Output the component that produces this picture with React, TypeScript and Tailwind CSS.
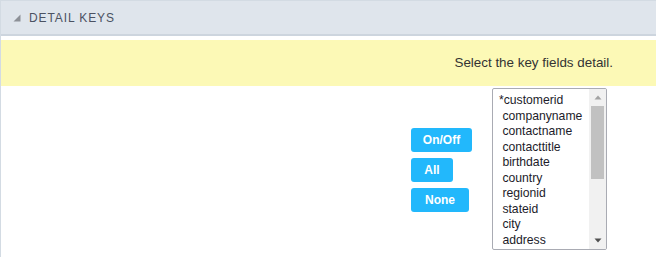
import React from "react";

const items = [
  "*customerid",
  " companyname",
  " contactname",
  " contacttitle",
  " birthdate",
  " country",
  " regionid",
  " stateid",
  " city",
  " address",
  " postalcode",
];

export default function App() {
  return (
    <div
      className="w-[656px] h-[257px] bg-white border-l border-[#d3dbe3] overflow-hidden"
      style={{ fontFamily: '"Liberation Sans", Arial, sans-serif' }}
    >
      <div className="h-[36px] bg-[#dfe5ec] border-t border-[#d3dbe3] border-b-2 border-b-[#cdd5de] flex items-center pl-[12px]">
        <svg width="8" height="8" viewBox="0 0 8 8" className="mr-[8px] mt-[1px]">
          <polygon points="7.5,0.5 7.5,7.5 0.5,7.5" fill="#8d9197" />
        </svg>
        <span className="text-[12px] tracking-[0.9px] text-[#4b5262] leading-none mt-[1px]">DETAIL KEYS</span>
      </div>
      <div className="h-[4px]" />
      <div className="h-[46px] bg-[#fcf9b6] flex items-center justify-end pr-[43px]">
        <span className="text-[13.4px] text-[#333] mt-[1px]">Select the key fields detail.</span>
      </div>
      <div className="flex justify-end items-center pr-[49px] pt-[2px]">
        <div className="flex flex-col gap-[6px] items-start mr-[20px] mt-[2px]">
          <button className="w-[61px] h-[24px] bg-[#22b8fc] text-white text-[12px] font-bold rounded-[3px] leading-none">On/Off</button>
          <button className="w-[42px] h-[24px] bg-[#22b8fc] text-white text-[12px] font-bold rounded-[3px] leading-none">All</button>
          <button className="w-[58px] h-[24px] bg-[#22b8fc] text-white text-[12px] font-bold rounded-[3px] leading-none">None</button>
        </div>
        <div className="w-[115px] h-[162px] border border-[#a9abb3] rounded-[2px] flex overflow-hidden bg-white">
          <div className="flex-1 overflow-hidden pt-[4px] pl-[6px]">
            {items.map((it) => (
              <div key={it} className="text-[12.2px] leading-[15.5px] text-[#1c1c2a] whitespace-pre">
                {it}
              </div>
            ))}
          </div>
          <div className="w-[17px] bg-[#f1f1f1] flex flex-col items-center">
            <div className="h-[17px] flex items-center justify-center">
              <svg width="8" height="5" viewBox="0 0 8 5">
                <polygon points="4,0.5 7.5,4.5 0.5,4.5" fill="#a3a3a3" />
              </svg>
            </div>
            <div className="w-[13px] h-[73px] bg-[#c1c1c1]" />
            <div className="flex-1" />
            <div className="h-[17px] flex items-center justify-center">
              <svg width="8" height="5" viewBox="0 0 8 5">
                <polygon points="0.5,0.5 7.5,0.5 4,4.5" fill="#505050" />
              </svg>
            </div>
          </div>
        </div>
      </div>
    </div>
  );
}
